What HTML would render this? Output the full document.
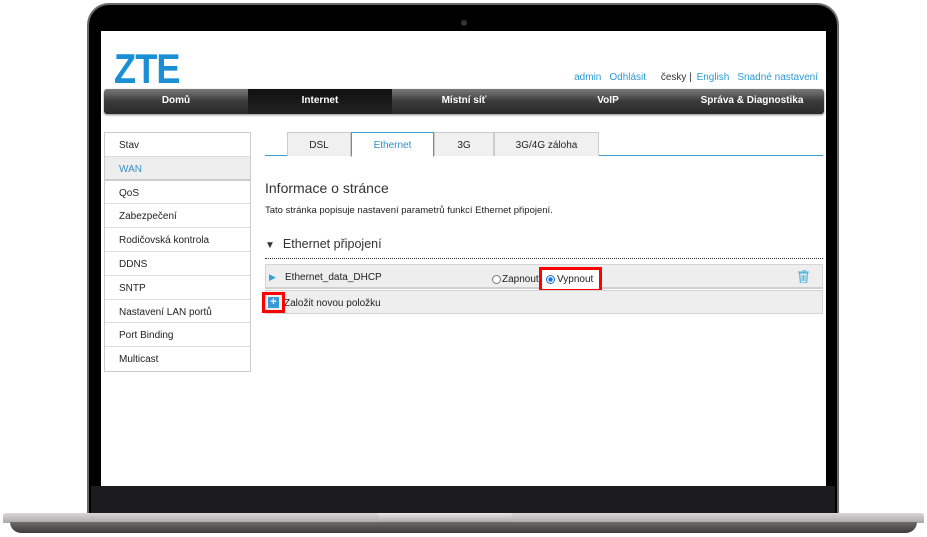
<!DOCTYPE html>
<html><head><meta charset="utf-8"><style>
*{margin:0;padding:0;box-sizing:border-box}
body{width:927px;height:537px;background:#fff;position:relative;overflow:hidden;font-family:"Liberation Sans",sans-serif;font-size:10px;color:#222}
.abs{position:absolute}
#lid{left:87px;top:3px;width:752px;height:513px;background:#000;border-radius:22px 22px 0 0;border:2px solid #6a6a6a;border-bottom:none}
#chin{left:91px;top:486px;width:744px;height:28px;background:#1c1b1d}
#base{left:3px;top:513px;width:921px;height:10px;background:linear-gradient(#d8d6d6,#aaa8a8);border-radius:3px 3px 0 0}
#base2{left:10px;top:522px;width:907px;height:11px;background:linear-gradient(#6d6b6a,#3e3c3c);border-radius:0 0 40px 40px}
#notch{left:378px;top:513px;width:134px;height:9px;background:linear-gradient(#e8e6e6,#a9a7a7);border-radius:0 0 6px 6px}
#cam{left:461px;top:20px;width:6px;height:6px;border-radius:50%;background:#333}
#screen{left:101px;top:31px;width:725px;height:455px;background:#fff}
.logo{left:13px;top:14px;font-size:42px;font-weight:bold;color:#1a8fd6;transform:scaleX(0.86);transform-origin:left;letter-spacing:-1px}
.top{right:8px;top:41px;font-size:10px;color:#333}
.top a{color:#2b9ad6;text-decoration:none;margin-left:8px}
#nav{left:3px;top:58px;width:720px;height:25px;background:linear-gradient(#7a7a7a,#3a3a3a 50%,#2a2a2a);border-radius:3px;display:flex;color:#fff;font-size:10px;font-weight:bold;box-shadow:0 1px 2px #888}
#nav div{flex:1;text-align:center;line-height:24px}
#nav .act{background:linear-gradient(#111,#222);}
#side{left:3px;top:101px;width:147px;border:1px solid #ccc}
#side div{height:23.8px;line-height:25px;padding-left:14px;border-bottom:1px solid #ddd;font-size:10px}
#side div:last-child{border-bottom:none}
#side .sel{background:#eee;color:#3a8fc8;border-bottom:2px solid #ccc}
#tabs{left:164px;top:101px;width:558px;height:24px;border-bottom:1px solid #3ba0c8}
.tab{position:absolute;top:0;height:24px;background:#f0f0f0;border:1px solid #ccc;border-bottom:none;text-align:center;line-height:25px;font-size:10px}
.tab.a{background:#fff;border:1px solid #3ba0c8;border-bottom:1px solid #fff;color:#2b8fc8;height:25px}
h1{position:absolute;left:164px;top:149px;font-size:14px;font-weight:normal;color:#333}
.desc{left:164px;top:174px;font-size:9.5px}
.sec{left:164px;top:206px;font-size:12.5px;color:#333}
.dots{left:164px;top:227px;width:558px;border-top:1px dotted #333}
.row{left:164px;top:233px;width:558px;height:25px;background:#eee;border:1px solid #d4d4d4;border-bottom:2px solid #d0d0d0}
.row2{left:164px;top:259px;width:558px;height:24px;background:#eee;border:1px solid #d4d4d4}
.red{border:3px solid #f00}
</style></head><body>
<div id="lid" class="abs"></div>
<div id="cam" class="abs"></div>
<div id="chin" class="abs"></div>
<div id="base" class="abs"></div>
<div id="base2" class="abs"></div>
<div id="notch" class="abs"></div>
<div id="screen" class="abs">
 <div class="abs logo">ZTE</div>
 <div class="abs top"><a>admin</a><a>Odhlásit</a> <span style="margin-left:12px">česky</span> | <a style="margin-left:2px">English</a><a>Snadné nastavení</a></div>
 <div id="nav" class="abs"><div>Domů</div><div class="act">Internet</div><div>Místní síť</div><div>VoIP</div><div>Správa &amp; Diagnostika</div></div>
 <div id="side" class="abs"><div>Stav</div><div class="sel">WAN</div><div>QoS</div><div>Zabezpečení</div><div>Rodičovská kontrola</div><div>DDNS</div><div>SNTP</div><div>Nastavení LAN portů</div><div>Port Binding</div><div>Multicast</div></div>
 <div id="tabs" class="abs">
  <div class="tab" style="left:22px;width:64px">DSL</div>
  <div class="tab a" style="left:86px;width:83px">Ethernet</div>
  <div class="tab" style="left:169px;width:60px">3G</div>
  <div class="tab" style="left:229px;width:105px">3G/4G záloha</div>
 </div>
 <h1>Informace o stránce</h1>
 <div class="abs desc">Tato stránka popisuje nastavení parametrů funkcí Ethernet připojení.</div>
 <div class="abs sec"><span style="font-size:10px;margin-right:8px">▼</span>Ethernet připojení</div>
 <div class="abs dots"></div>
 <div class="abs row">
  <span class="abs" style="left:3px;top:7px;color:#3aa0d8;font-size:9px">▶</span>
  <span class="abs" style="left:19px;top:7px">Ethernet_data_DHCP</span>
  <span class="abs" style="left:226px;top:10px;width:9px;height:9px;border:1px solid #777;border-radius:50%;background:#fff"></span>
  <span class="abs" style="left:236px;top:9px">Zapnout</span>
  <div class="abs red" style="left:273px;top:2px;width:63px;height:25px;background:#fff"></div>
  <span class="abs" style="left:280px;top:10px;width:9px;height:9px;border:1px solid #1a6fd6;border-radius:50%;background:radial-gradient(#1a73e8 40%,#fff 50%)"></span>
  <span class="abs" style="left:291px;top:9px">Vypnout</span>
  <svg class="abs" style="left:532px;top:5px" width="11" height="13" viewBox="0 0 11 13"><path d="M0 2h11M4 0h3v2M1.5 3h8l-1 10h-6z" fill="none" stroke="#5ab8e0" stroke-width="1.3"/><path d="M4 5v6M5.5 5v6M7 5v6" stroke="#5ab8e0"/></svg>
 </div>
 <div class="abs row2">
  <span class="abs" style="left:18px;top:7px">Založit novou položku</span>
 </div>
 <div class="abs red" style="left:161px;top:261px;width:23px;height:21px"></div>
 <div class="abs" style="left:167px;top:266px;width:11px;height:11px;background:#3a9ad8;color:#fff;font-size:11px;line-height:10px;text-align:center;font-weight:bold">+</div>
</div>
</body></html>
